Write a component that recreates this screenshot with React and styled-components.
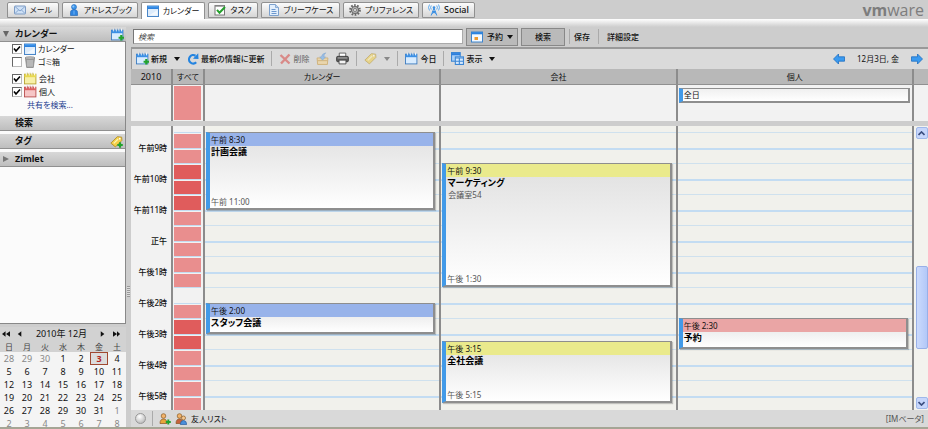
import React from "react";
import styled, { createGlobalStyle, css } from "styled-components";

const Global = createGlobalStyle`
  * { box-sizing: border-box; }
  html, body, #root { height: 100%; }
  body {
    margin: 0;
    background: #cdcdcd;
    color: #111;
    font: 8px/12px "Noto Sans", "Noto Sans CJK JP", sans-serif;
    font-feature-settings: "palt";
    overflow: hidden;
  }
  button, input { font: inherit; color: inherit; font-feature-settings: inherit; }
`;

const Svg = styled.svg`
  width: ${(p) => p.$w || 12}px;
  height: ${(p) => p.$h || p.$w || 12}px;
  flex: none;
  display: block;
`;

const Icon = ({ w, h, children }) => (
  <Svg $w={w} $h={h} viewBox="0 0 12 12" aria-hidden="true">{children}</Svg>
);

const MailIcon = () => (
  <Icon>
    <rect x="0.5" y="2" width="11" height="8" rx="0.6" fill="#cfe1f6" stroke="#7e9cc4" />
    <path d="M1 2.5 6 7l5-4.5M1 9.5l3.6-3.6M11 9.5 7.4 5.9" fill="none" stroke="#7e9fcb" strokeWidth="0.9" />
  </Icon>
);
const PersonIcon = () => (
  <Icon>
    <circle cx="6" cy="3" r="2.5" fill="#3d96ea" stroke="#2068bd" strokeWidth="0.6" />
    <path d="M2.5 11.5V8.5C2.5 6.3 4 5.6 6 5.6s3.5.7 3.5 2.9v3z" fill="#2f84df" stroke="#1d5fae" strokeWidth="0.6" />
    <circle cx="5.3" cy="2.4" r="1" fill="#8cc6fb" />
    <path d="M6 6.5v4" stroke="#6fb3f6" />
  </Icon>
);
const CalendarIcon = ({ head = "#2b82de", top = "#5aa7f2", body = "#dcebfb", line = "#4a86c8" }) => (
  <Icon>
    <rect x="0.5" y="1" width="11" height="10.5" fill={body} stroke={line} />
    <rect x="0.5" y="1" width="11" height="3" fill={head} />
    <rect x="1" y="1.3" width="10" height="1" fill={top} />
    <path d="M2 10.5 10.5 5v5.5z" fill="#fff" opacity="0.6" />
  </Icon>
);
const Book = ({ plus, tone = "#3b90e6", body = "#d8ecff", line = "#3878be" }) => (
  <Icon w={13}>
    <rect x="0.5" y="2" width="10.5" height="9" fill={body} stroke={line} strokeWidth="0.8" />
    <rect x="0.5" y="2" width="10.5" height="2.8" fill={tone} />
    <path d="M2.5.6v2.5M5 .6v2.5M7.5.6v2.5M9.8.6v2.5" stroke="#fff" strokeWidth="0.9" />
    <path d="M3.1.6v2.5M5.6.6v2.5M8.1.6v2.5" stroke={line} strokeWidth="0.5" />
    {plus && <path d="M9.5 6.5v5M7 9h5" stroke="#22a32d" strokeWidth="2" />}
  </Icon>
);
const TaskIcon = () => (
  <Icon>
    <rect x="1" y="1.5" width="9.5" height="9.5" fill="#fff" stroke="#777" />
    <path d="M1 2h9.5" stroke="#888" strokeWidth="1.4" />
    <path d="M3 5.8 5.5 8.8 11 3" fill="none" stroke="#24a02c" strokeWidth="2" />
  </Icon>
);
const DocIcon = () => (
  <Icon>
    <path d="M1.5.5H7.5L10.5 3.5v8h-9z" fill="#e3effc" stroke="#7da1cd" />
    <path d="M7.5.5v3h3" fill="#b6d0ef" stroke="#7da1cd" strokeWidth="0.8" />
    <path d="M3.5 5.5h4M3.5 7.5h5M3.5 9.5h5" stroke="#6c98cf" />
  </Icon>
);
const GearIcon = () => (
  <Icon>
    <circle cx="6" cy="6" r="4.9" fill="none" stroke="#666" strokeWidth="1.9" strokeDasharray="1.7 1.38" />
    <circle cx="6" cy="6" r="3.5" fill="#b4b4b4" stroke="#666" strokeWidth="1.1" />
    <circle cx="6" cy="6" r="1.5" fill="#f2f2f2" stroke="#6b6b6b" strokeWidth="0.8" />
  </Icon>
);
const SocialIcon = () => (
  <Icon>
    <path d="M3.3 1.5q-1.5 2 0 4M1.5.5q-2 3 0 6M8.7 1.5q1.5 2 0 4M10.5.5q2 3 0 6" fill="none" stroke="#4da3ef" strokeWidth="0.9" />
    <circle cx="6" cy="3.5" r="1.3" fill="#3a8fe3" />
    <path d="M6 4 3.2 11.5M6 4l2.8 7.5M4.7 7.5h2.6M4 9.5l3.5-2M8 9.5l-3.5-2" fill="none" stroke="#3a8fe3" />
  </Icon>
);
const TrashIcon = () => (
  <Icon>
    <path d="M1.5 2.5h9L9.3 11.5H2.7z" fill="#a5a5a5" stroke="#7c7c7c" strokeWidth="0.7" />
    <ellipse cx="6" cy="2" rx="5" ry="1.2" fill="#c9c9c9" stroke="#777" strokeWidth="0.7" />
    <path d="M4 4v6.5M6 4v6.5M8 4v6.5" stroke="#d5d5d5" strokeWidth="0.8" />
  </Icon>
);
const TagIcon = ({ plus, faded }) => (
  <Icon w={13}>
    <g opacity={faded ? 0.55 : 1}>
      <path d="M.8 7.5 6.8 1.5 10.8 2 11 5 5 11z" fill="#f3cf48" stroke="#b08d28" strokeWidth="0.8" />
      <path d="M3.5 7.7 7.5 3.7" stroke="#fff3b0" strokeWidth="1.2" />
      <circle cx="9" cy="3.4" r="0.8" fill="#fff" />
    </g>
    {plus && <path d="M9.3 6.8v5M6.8 9.3h5" stroke="#22a32d" strokeWidth="1.9" />}
  </Icon>
);
const RefreshIcon = () => (
  <Icon>
    <path d="M9.2 9.3A4.2 4.2 0 1 1 8.5 2.8" fill="none" stroke="#2484e0" strokeWidth="2.2" />
    <path d="M6 5.8 11.5 6 11.2.3z" fill="#2484e0" />
  </Icon>
);
const DeleteIcon = () => (
  <Icon>
    <path d="M1.5 2 10.5 10.5M10.5 1.5 2 10.5" stroke="#d98a88" strokeWidth="2.4" />
  </Icon>
);
const MoveIcon = () => (
  <Icon w={13}>
    <g opacity="0.7">
      <path d="M1 5.5h10l-.5 6h-9z" fill="#f0d49a" stroke="#c99c4a" strokeWidth="0.8" />
      <path d="M1.5 8h9" stroke="#c99c4a" strokeWidth="0.8" />
      <path d="M6 7.5 3.5 4.5h1.5Q5.5 1.5 9 .8 7 2.5 7.3 4.5h1.5z" fill="#7fb4ec" stroke="#5b8fca" strokeWidth="0.5" />
    </g>
  </Icon>
);
const PrintIcon = () => (
  <Icon w={13}>
    <path d="M3 1h6v4H3z" fill="#fff" stroke="#555" strokeWidth="0.8" />
    <rect x="0.5" y="4" width="11" height="5" rx="1.2" fill="#5a5a5a" stroke="#333" strokeWidth="0.7" />
    <path d="M1.5 5.5h9" stroke="#b7b7b7" strokeWidth="0.9" />
    <path d="M2.8 7.5h6.4v3.5H2.8z" fill="#f3f3f3" stroke="#444" strokeWidth="0.8" />
  </Icon>
);
const ViewIcon = () => (
  <Icon w={13}>
    <rect x="0.5" y="0.5" width="8" height="8" fill="#a9d0f8" stroke="#3c86d4" />
    <path d="M.5 2h8" stroke="#2c7fdc" strokeWidth="2" />
    <rect x="4" y="4.5" width="7.5" height="7" fill="#d6e9fd" stroke="#3c86d4" />
    <path d="M4 5.5h7.5M4 8.5h7.5M7.7 6v5" stroke="#3c86d4" />
  </Icon>
);
const AppointmentIcon = () => (
  <Icon>
    <rect x="0.5" y="1" width="11" height="10" fill="#f3f9ff" stroke="#3d84cd" />
    <path d="M.5 2.2h11" stroke="#2b82de" strokeWidth="2.2" />
    <rect x="3.5" y="6" width="3.5" height="3" fill="#ee9a2e" />
  </Icon>
);
const Arrow = ({ right }) => (
  <Icon>
    <path
      d={right ? "M11.5 6 6.5 1v2.8h-6v4.4h6V11z" : "M.5 6 5.5 1v2.8h6v4.4h-6V11z"}
      fill="#3a9af0" stroke="#1f6fc0" strokeWidth="0.8"
    />
  </Icon>
);
const BuddyIcon = ({ pair }) => (
  <Icon>
    <circle cx="4.5" cy="3" r="2.3" fill="#f2b36b" stroke="#8a5a22" strokeWidth="0.7" />
    <path d="M1 10.5Q1 6 4.5 6T8 10.5z" fill={pair ? "#c6623c" : "#e8a53a"} stroke="#8a5420" strokeWidth="0.7" />
    {pair ? (
      <>
        <circle cx="8.5" cy="5" r="2" fill="#f6c892" stroke="#8a5a22" strokeWidth="0.7" />
        <path d="M5.3 11.5Q5.5 7.5 8.5 7.5t3.2 4z" fill="#4a8fdc" stroke="#2c5f9e" strokeWidth="0.7" />
      </>
    ) : (
      <path d="M9.3 6.5v5M6.8 9h5" stroke="#22a32d" strokeWidth="1.9" />
    )}
  </Icon>
);
const Caret = ({ faded }) => (
  <Svg $w={6} $h={4} viewBox="0 0 6 4" aria-hidden="true">
    <path d="M0 0h6L3 4z" fill={faded ? "#888" : "#111"} />
  </Svg>
);

const Page = styled.div`
  height: 100vh;
  display: flex;
  flex-direction: column;
  border-bottom: 2px solid #a5a595;
`;
const TopBar = styled.header`
  height: 19px;
  flex: none;
  display: flex;
  align-items: flex-end;
  justify-content: space-between;
  padding: 0 4px 0 7px;
`;
const Tabs = styled.nav`
  display: flex;
  align-items: flex-end;
  gap: 3px;
`;
const Tab = styled.button`
  height: ${(p) => (p.$active ? 17 : 16)}px;
  min-width: ${(p) => p.$width}px;
  margin-bottom: ${(p) => (p.$active ? 0 : 1)}px;
  display: flex;
  align-items: center;
  justify-content: center;
  gap: 4px;
  padding: 0 3px;
  white-space: nowrap;
  border: 1px solid #909090;
  border-bottom: ${(p) => (p.$active ? "0" : "1px solid #909090")};
  border-radius: 2px 2px 0 0;
  background: ${(p) => (p.$active ? "#fff" : "linear-gradient(#fbfbfb, #d6d6d6)")};
  ${(p) => p.$latin && css`
    font-size: 9px;
    font-weight: 500;
  `}
`;
const Brand = styled.span`
  align-self: center;
  font: 400 16px/18px "Open Sans", sans-serif;
  color: #7d7d7d;
`;
const BrandStrong = styled.b`
  font-weight: 700;
`;
const Strip = styled.div`
  height: 8px;
  flex: none;
  background: linear-gradient(#fff, #cdcdcd);
`;
const Body = styled.div`
  flex: 1;
  min-height: 0;
  display: flex;
`;

const Sidebar = styled.aside`
  width: 126px;
  flex: none;
  display: flex;
  flex-direction: column;
`;
const Tree = styled.div`
  flex: 1;
  background: #fbfbfb;
  border-right: 1px solid #888;
  border-bottom: 1px solid #888;
`;
const SectionHead = styled.h2`
  height: 15px;
  margin: 0 0 ${(p) => (p.$gap ? 3 : 0)}px;
  padding: 0 2px 0 3px;
  display: flex;
  align-items: center;
  gap: 4px;
  font-size: 9px;
  font-weight: 700;
  background: linear-gradient(#d8d8d8, #bebebe);
  border-bottom: 1px solid #909090;
`;
const Twisty = styled.span`
  width: 8px;
  display: flex;
`;
const HeadLabel = styled.span`
  flex: 1;
`;
const FolderList = styled.div`
  padding: 0 0 4px 12px;
  height: 74px;
`;
const Folder = styled.label`
  height: 13px;
  margin-top: ${(p) => (p.$spaced ? 4 : 0)}px;
  display: flex;
  align-items: center;
  gap: 2px;
`;
const Check = styled.input`
  appearance: none;
  width: 10px;
  height: 10px;
  margin: 0;
  border: 1px solid #666;
  border-right-color: #bbb;
  border-bottom-color: #bbb;
  background: #fff;
  &:checked {
    background: #fff url("data:image/svg+xml,%3Csvg xmlns='http://www.w3.org/2000/svg' viewBox='0 0 8 8'%3E%3Cpath d='M1 3.5 3 6 7 1.5' fill='none' stroke='%23000' stroke-width='1.6'/%3E%3C/svg%3E");
  }
`;
const ShareLink = styled.a`
  display: block;
  margin: 1px 0 0 15px;
  color: #1b3d8f;
  text-decoration: none;
`;

const MiniCal = styled.section`
  margin-top: 3px;
  height: 100px;
  overflow: hidden;
  background: #f4f4f4;
`;
const MiniHead = styled.div`
  height: 14px;
  display: flex;
  align-items: center;
  gap: 6px;
  padding: 0 5px 0 2px;
  background: #d2d2d2;
`;
const MiniNav = styled.button`
  border: 0;
  padding: 0;
  background: none;
`;
const MiniTitle = styled.span`
  flex: 1;
  text-align: center;
  font-size: 9px;
`;
const MiniTable = styled.table`
  width: 100%;
  border-collapse: collapse;
  table-layout: fixed;
  text-align: center;
`;
const MiniDay = styled.th`
  height: 11px;
  padding: 0;
  line-height: 11px;
  font-weight: 400;
  color: #444;
  background: #d2d2d2;
`;
const MiniDate = styled.td`
  height: 13px;
  padding: 0;
  line-height: 13px;
  font-size: 9px;
  color: ${(p) => (p.$other ? "#888" : "#111")};
  ${(p) => p.$today && css`
    color: #b3261e;
    font-weight: 700;
    background: #dcdcdc;
    outline: 1px solid #a04830;
    outline-offset: -1px;
  `}
`;

const Splitter = styled.div`
  width: 5px;
  flex: none;
  display: flex;
  align-items: center;
  justify-content: center;
  padding-top: 128px;
`;
const Grip = styled.div`
  width: 3px;
  height: 11px;
  background: repeating-linear-gradient(#999 0 1px, #ddd 1px 2px);
`;

const Main = styled.main`
  flex: 1;
  min-width: 0;
  display: flex;
  flex-direction: column;
`;
const SearchBar = styled.form`
  height: 20px;
  display: flex;
  align-items: center;
  gap: 3px;
  padding: 0 0 1px 2px;
`;
const SearchInput = styled.input`
  width: 330px;
  height: 15px;
  padding: 0 4px;
  border: 1px solid #777;
  border-right-color: #aaa;
  border-bottom-color: #aaa;
  background: #fff;
  &::placeholder { color: #444; font-style: italic; opacity: 1; }
`;
const BarButton = styled.button`
  height: 18px;
  min-width: ${(p) => p.$width}px;
  display: flex;
  align-items: center;
  justify-content: center;
  gap: 4px;
  padding: 0 4px;
  border: 1px solid #888;
  background: #bababa;
  font-weight: 500;
`;
const PlainButton = styled.button`
  display: flex;
  align-items: center;
  gap: 2px;
  border: 0;
  padding: 0;
  background: none;
  white-space: nowrap;
  color: ${(p) => (p.$faded ? "#777" : "#111")};
  font-weight: 500;
`;
const Divider = styled.span`
  width: 1px;
  height: 15px;
  margin: 0 ${(p) => p.$gap || 0}px;
  background: #aaa;
`;
const Toolbar = styled.div`
  height: 22px;
  display: flex;
  align-items: center;
  gap: 7px;
  padding: 0 5px 1px 4px;
  background: #dadada;
  border-top: 2px solid #999;
  border-left: 1px solid #999;
`;
const Spacer = styled.span`
  flex: 1;
`;
const DateText = styled.span`
  margin: 0 5px;
`;

const columns = css`
  display: grid;
  grid-template-columns: 42px 32px 1fr 1fr 1fr 14px;
`;
const HeadRow = styled.div`
  ${columns}
  height: 16px;
  background: #b8b8b8;
  border-bottom: 1px solid #909090;
`;
const HeadCell = styled.div`
  text-align: center;
  line-height: 15px;
  font-size: ${(p) => (p.$year ? 9 : 8)}px;
  border-right: 2px solid #8c8c8c;
`;
const AllDayRow = styled.div`
  ${columns}
  height: 36px;
  background: #f2f2f2;
`;
const AllDayCell = styled.div`
  border-right: 2px solid #8c8c8c;
  padding: ${(p) => (p.$busy ? "1px 2px 1px 1px" : "3px 2px 0 1px")};
`;
const BusyAllDay = styled.div`
  height: 100%;
  background: #e98e8e;
`;
const Gap = styled.div`
  height: 5px;
  background: #cdcdcd;
`;
const GridRow = styled.div`
  ${columns}
  flex: 1;
  min-height: 0;
  overflow: hidden;
  background: #f2f2f2;
`;
const Hours = styled.div`
  border-right: 2px solid #8c8c8c;
  padding: 15px 4px 0 0;
  text-align: right;
  font-weight: 500;
  height: 100%;
  overflow: hidden;
`;
const Hour = styled.div`
  height: 31px;
  line-height: 13px;
`;
const Busy = styled.div`
  border-right: 2px solid #8c8c8c;
  padding: 6px 2px 0 1px;
  height: 100%;
  overflow: hidden;
`;
const Slot = styled.div`
  height: ${(p) => (p.$half ? 16 : 15)}px;
  border-top: 1px solid #c4dcf0;
  background: ${(p) => ["#f2f2f2", "#e98e8e", "#e05c5c"][p.$level]};
  box-shadow: inset 0 1px #f2f2f2;
`;
const DayColumn = styled.div`
  position: relative;
  overflow: hidden;
  border-right: 2px solid #8c8c8c;
  background-color: #f1f1ec;
  background-image: linear-gradient(#c3dcf2 0 2px, transparent 2px 15px, #cfe1ee 15px 16px, transparent 16px);
  background-size: 100% 31px;
  background-position: 0 22px;
`;
const eventBox = css`
  border: 1px solid #8e8e8e;
  border-right-width: 2px;
  border-bottom-width: 2px;
  border-left: 4px solid #429ae8;
`;
const Event = styled.article`
  ${eventBox}
  position: absolute;
  left: 1px;
  right: 4px;
  display: flex;
  flex-direction: column;
  background: linear-gradient(#e0e0e0, #fff);
  box-shadow: 1px 1px 1px #0003;
`;
const EventTime = styled.div`
  height: 13px;
  flex: none;
  padding-left: 1px;
  line-height: 13px;
  background: ${(p) => p.$color};
`;
const EventTitle = styled.div`
  padding-left: 1px;
  font-size: 9px;
  font-weight: 700;
  line-height: 12px;
  color: #000;
`;
const EventPlace = styled.div`
  flex: none;
  padding-left: 2px;
  line-height: 11px;
  color: #555;
`;
const EventEnd = styled.div`
  margin-top: auto;
  padding-left: 1px;
  color: #555;
`;
const AllDayEvent = styled.div`
  ${eventBox}
  height: 15px;
  padding-left: 1px;
  line-height: 12px;
  background: linear-gradient(#f0f0f0, #fff);
`;
const Scroll = styled.div`
  display: flex;
  flex-direction: column;
  padding: 1px 0 1px 2px;
  background: #f3f3ee;
`;
const ScrollButton = styled.button`
  height: 12px;
  flex: none;
  display: flex;
  align-items: center;
  justify-content: center;
  padding: 0;
  border: 1px solid #9fb8ea;
  border-radius: 2px;
  background: #c6d6fb;
`;
const ScrollTrack = styled.div`
  flex: 1;
  display: grid;
  grid-template-rows: 128fr 84fr 48fr;
`;
const ScrollThumb = styled.div`
  grid-row: 2;
  border: 1px solid #98b0e8;
  border-radius: 2px;
  background: linear-gradient(90deg, #cbdafc, #b3c8f8);
`;
const StatusBar = styled.footer`
  height: 17px;
  flex: none;
  display: flex;
  align-items: center;
  gap: 4px;
  padding: 0 4px;
  background: #d9d9d9;
`;
const Presence = styled.span`
  width: 11px;
  height: 11px;
  border-radius: 50%;
  border: 1px solid #999;
  background: radial-gradient(circle at 40% 30%, #fff, #aaa);
`;
const Beta = styled.span`
  color: #555;
`;

const Chevron = ({ up }) => (
  <Svg $w={7} $h={5} viewBox="0 0 7 5" aria-hidden="true">
    <path d={up ? "M.5 4 3.5 1l3 3" : "M.5 1l3 3 3-3"} fill="none" stroke="#3c4f80" strokeWidth="1.7" />
  </Svg>
);

const NAV = {
  first: "M4 0v6L0 3zM9 0v6L4.5 3z",
  prev: "M6 0v6L2 3z",
  next: "M2 0v6l4-3z",
  last: "M0 0v6l4.5-3zM4.5 0v6L8 3z",
};
const NavButton = ({ kind, label }) => (
  <MiniNav type="button" aria-label={label}>
    <Svg $w={8} $h={6} viewBox="0 0 9 6" aria-hidden="true"><path d={NAV[kind]} fill="#111" /></Svg>
  </MiniNav>
);

const TABS = [
  { label: "メール", width: 52, icon: <MailIcon /> },
  { label: "アドレスブック", width: 76, icon: <PersonIcon /> },
  { label: "カレンダー", width: 64, icon: <CalendarIcon />, active: true },
  { label: "タスク", width: 50, icon: <TaskIcon /> },
  { label: "ブリーフケース", width: 79, icon: <DocIcon /> },
  { label: "プリファレンス", width: 76, icon: <GearIcon /> },
  { label: "Social", width: 53, icon: <SocialIcon />, latin: true },
];

const FOLDERS = [
  { label: "カレンダー", checked: true, icon: <CalendarIcon /> },
  { label: "ゴミ箱", checked: false, icon: <TrashIcon /> },
  { label: "会社", checked: true, spaced: true, icon: <Book tone="#e8d850" body="#f7f0a8" line="#b5a12c" /> },
  { label: "個人", checked: true, icon: <Book tone="#dc6060" body="#f6c6c6" line="#b54848" /> },
];

const DAYS = ["日", "月", "火", "水", "木", "金", "土"];
const WEEKS = Array.from({ length: 6 }, (_, w) =>
  Array.from({ length: 7 }, (_, d) => {
    const n = w * 7 + d - 2;
    if (n < 1) return { day: 30 + n, other: true };
    if (n > 31) return { day: n - 31, other: true };
    return { day: n, today: n === 3 };
  })
);

const HOURS = ["午前9時", "午前10時", "午前11時", "正午", "午後1時", "午後2時", "午後3時", "午後4時", "午後5時"];
const BUSY = [1, 1, 2, 2, 2, 1, 1, 1, 1, 1, 0, 1, 2, 2, 1, 1, 1, 1];

const HOUR_PX = 31;
const NINE_PX = 22;
const at = (hour) => Math.floor(NINE_PX + (hour - 9) * HOUR_PX);

const CALENDARS = [
  {
    name: "カレンダー",
    color: "#98b3ea",
    events: [
      { from: 8.5, to: 11, start: "午前 8:30", title: "計画会議", end: "午前 11:00" },
      { from: 14, to: 15, start: "午後 2:00", title: "スタッフ会議" },
    ],
  },
  {
    name: "会社",
    color: "#eaea8c",
    events: [
      { from: 9.5, to: 13.5, start: "午前 9:30", title: "マーケティング", place: "会議室54", end: "午後 1:30" },
      { from: 15.25, to: 17.25, start: "午後 3:15", title: "全社会議", end: "午後 5:15" },
    ],
  },
  {
    name: "個人",
    color: "#eaa5a5",
    allDay: "全日",
    events: [{ from: 14.5, to: 15.5, start: "午後 2:30", title: "予約" }],
  },
];

export default function App() {
  return (
    <Page>
      <Global />
      <TopBar>
        <Tabs>
          {TABS.map((t) => (
            <Tab key={t.label} type="button" $width={t.width} $active={t.active} $latin={t.latin}>
              {t.icon}
              {t.label}
            </Tab>
          ))}
        </Tabs>
        <Brand><BrandStrong>vm</BrandStrong>ware</Brand>
      </TopBar>
      <Strip />
      <Body>
        <Sidebar>
          <SectionHead>
            <Twisty><Svg $w={6} $h={6} viewBox="0 0 6 6"><path d="M0 0h6L3 6z" fill="#666" /></Svg></Twisty>
            <HeadLabel>カレンダー</HeadLabel>
            <Book plus />
          </SectionHead>
          <Tree>
            <FolderList>
              {FOLDERS.map((f) => (
                <Folder key={f.label} $spaced={f.spaced}>
                  <Check type="checkbox" defaultChecked={f.checked} />
                  {f.icon}
                  {f.label}
                </Folder>
              ))}
              <ShareLink href="#share">共有を検索...</ShareLink>
            </FolderList>
            <SectionHead $gap>
              <Twisty />
              <HeadLabel>検索</HeadLabel>
            </SectionHead>
            <SectionHead $gap>
              <Twisty />
              <HeadLabel>タグ</HeadLabel>
              <TagIcon plus />
            </SectionHead>
            <SectionHead>
              <Twisty><Svg $w={6} $h={6} viewBox="0 0 6 6"><path d="M0 0v6l6-3z" fill="#777" /></Svg></Twisty>
              <HeadLabel>Zimlet</HeadLabel>
            </SectionHead>
          </Tree>
          <MiniCal>
            <MiniHead>
              <NavButton kind="first" label="前年" />
              <NavButton kind="prev" label="前月" />
              <MiniTitle>2010年 12月</MiniTitle>
              <NavButton kind="next" label="翌月" />
              <NavButton kind="last" label="翌年" />
            </MiniHead>
            <MiniTable>
              <thead>
                <tr>{DAYS.map((d) => <MiniDay key={d} scope="col">{d}</MiniDay>)}</tr>
              </thead>
              <tbody>
                {WEEKS.map((week, i) => (
                  <tr key={i}>
                    {week.map((c, j) => (
                      <MiniDate key={j} $other={c.other} $today={c.today}>{c.day}</MiniDate>
                    ))}
                  </tr>
                ))}
              </tbody>
            </MiniTable>
          </MiniCal>
        </Sidebar>
        <Splitter><Grip /></Splitter>
        <Main>
          <SearchBar>
            <SearchInput aria-label="検索" placeholder="検索" />
            <BarButton type="button" $width={52}><AppointmentIcon />予約 <Caret /></BarButton>
            <BarButton type="submit" $width={44}>検索</BarButton>
            <Divider $gap={1} />
            <PlainButton type="button">保存</PlainButton>
            <Divider $gap={5} />
            <PlainButton type="button">詳細設定</PlainButton>
          </SearchBar>
          <Toolbar>
            <PlainButton type="button"><Book plus />新規</PlainButton>
            <Caret />
            <PlainButton type="button"><RefreshIcon />最新の情報に更新</PlainButton>
            <Divider />
            <PlainButton type="button" $faded><DeleteIcon />削除</PlainButton>
            <PlainButton type="button" aria-label="移動"><MoveIcon /></PlainButton>
            <PlainButton type="button" aria-label="印刷"><PrintIcon /></PlainButton>
            <Divider />
            <PlainButton type="button" aria-label="タグ"><TagIcon faded /></PlainButton>
            <Caret faded />
            <Divider />
            <PlainButton type="button"><Book />今日</PlainButton>
            <Divider />
            <PlainButton type="button"><ViewIcon />表示</PlainButton>
            <Caret />
            <Spacer />
            <PlainButton type="button" aria-label="前日"><Arrow /></PlainButton>
            <DateText>12月3日, 金</DateText>
            <PlainButton type="button" aria-label="翌日"><Arrow right /></PlainButton>
          </Toolbar>
          <HeadRow>
            <HeadCell $year>2010</HeadCell>
            <HeadCell>すべて</HeadCell>
            {CALENDARS.map((c) => <HeadCell key={c.name}>{c.name}</HeadCell>)}
          </HeadRow>
          <AllDayRow>
            <AllDayCell />
            <AllDayCell $busy><BusyAllDay /></AllDayCell>
            {CALENDARS.map((c) => (
              <AllDayCell key={c.name}>{c.allDay && <AllDayEvent>{c.allDay}</AllDayEvent>}</AllDayCell>
            ))}
          </AllDayRow>
          <Gap />
          <GridRow>
            <Hours>{HOURS.map((h) => <Hour key={h}>{h}</Hour>)}</Hours>
            <Busy>{BUSY.map((level, i) => <Slot key={i} $level={level} $half={i % 2 === 0} />)}</Busy>
            {CALENDARS.map((c) => (
              <DayColumn key={c.name}>
                {c.events.map((e) => (
                  <Event key={e.title} style={{ top: at(e.from), height: at(e.to) - at(e.from) }}>
                    <EventTime $color={c.color}>{e.start}</EventTime>
                    <EventTitle>{e.title}</EventTitle>
                    {e.place && <EventPlace>{e.place}</EventPlace>}
                    {e.end && <EventEnd>{e.end}</EventEnd>}
                  </Event>
                ))}
              </DayColumn>
            ))}
            <Scroll>
              <ScrollButton type="button" aria-label="上へ"><Chevron up /></ScrollButton>
              <ScrollTrack><ScrollThumb /></ScrollTrack>
              <ScrollButton type="button" aria-label="下へ"><Chevron /></ScrollButton>
            </Scroll>
          </GridRow>
          <StatusBar>
            <Presence />
            <Divider $gap={2} />
            <BuddyIcon />
            <BuddyIcon pair />
            友人リスト
            <Spacer />
            <Beta>[IMベータ]</Beta>
          </StatusBar>
        </Main>
      </Body>
    </Page>
  );
}
